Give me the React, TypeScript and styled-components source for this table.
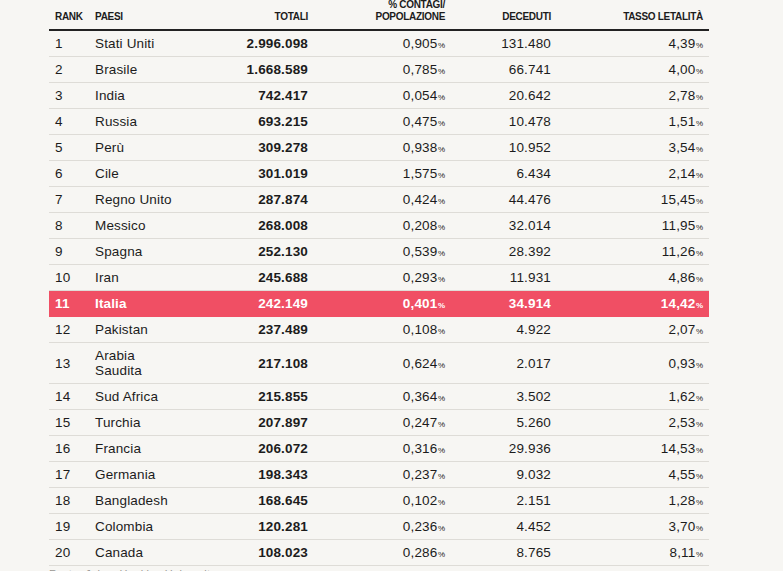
import React from "react";
import styled, { createGlobalStyle } from "styled-components";

const Global = createGlobalStyle`
  html, body { margin: 0; padding: 0; background: #f7f6f3; }
  body { font-family: "Liberation Sans", Arial, sans-serif; color: #1c1c1c; overflow: hidden; }
`;

const Wrap = styled.div`
  padding-left: 49px;
  width: 660px;
`;

const Grid = `
  display: grid;
  grid-template-columns: 46px 86px 127px 137px 106px 152px 6px;
  align-items: center;
`;

const HeadRow = styled.div`
  ${Grid}
  align-items: end;
  border-bottom: 2px solid #222;
  box-sizing: border-box;
  margin-top: -1px;
  height: 32px;
`;

const Th = styled.div<{ $right?: boolean; $pad?: number }>`
  font-size: 10px;
  font-weight: 700;
  text-transform: uppercase;
  letter-spacing: -0.3px;
  line-height: 12px;
  padding-bottom: 6px;
  text-align: ${(p) => (p.$right ? "right" : "left")};
  padding-left: ${(p) => p.$pad ?? 0}px;
  color: #1c1c1c;
`;

const Row = styled.div<{ $hi?: boolean }>`
  ${Grid}
  min-height: 25px;
  border-bottom: 1px solid ${(p) => (p.$hi ? "#f04f64" : "#dedcd7")};
  background: ${(p) => (p.$hi ? "#f04f64" : "transparent")};
  color: ${(p) => (p.$hi ? "#ffffff" : "#1c1c1c")};
  font-weight: ${(p) => (p.$hi ? 700 : 400)};
`;

const Td = styled.div<{ $right?: boolean; $bold?: boolean; $pad?: number }>`
  font-size: 13.5px;
  line-height: 15px;
  padding: 5px 0;
  text-align: ${(p) => (p.$right ? "right" : "left")};
  padding-left: ${(p) => p.$pad ?? 0}px;
  font-weight: ${(p) => (p.$bold ? 700 : "inherit")};
  letter-spacing: 0.15px;
`;

const Pct = styled.span`
  font-size: 8px;
  line-height: 0;
  letter-spacing: 0;
  margin-left: 0.5px;
`;

const Source = styled.div`
  font-size: 11px;
  color: #9a9893;
  padding-top: 2px;
  letter-spacing: 0.3px;
`;

type R = [string, string, string, string, string, string];
const data: R[] = [
  ["1", "Stati Uniti", "2.996.098", "0,905", "131.480", "4,39"],
  ["2", "Brasile", "1.668.589", "0,785", "66.741", "4,00"],
  ["3", "India", "742.417", "0,054", "20.642", "2,78"],
  ["4", "Russia", "693.215", "0,475", "10.478", "1,51"],
  ["5", "Perù", "309.278", "0,938", "10.952", "3,54"],
  ["6", "Cile", "301.019", "1,575", "6.434", "2,14"],
  ["7", "Regno Unito", "287.874", "0,424", "44.476", "15,45"],
  ["8", "Messico", "268.008", "0,208", "32.014", "11,95"],
  ["9", "Spagna", "252.130", "0,539", "28.392", "11,26"],
  ["10", "Iran", "245.688", "0,293", "11.931", "4,86"],
  ["11", "Italia", "242.149", "0,401", "34.914", "14,42"],
  ["12", "Pakistan", "237.489", "0,108", "4.922", "2,07"],
  ["13", "Arabia Saudita", "217.108", "0,624", "2.017", "0,93"],
  ["14", "Sud Africa", "215.855", "0,364", "3.502", "1,62"],
  ["15", "Turchia", "207.897", "0,247", "5.260", "2,53"],
  ["16", "Francia", "206.072", "0,316", "29.936", "14,53"],
  ["17", "Germania", "198.343", "0,237", "9.032", "4,55"],
  ["18", "Bangladesh", "168.645", "0,102", "2.151", "1,28"],
  ["19", "Colombia", "120.281", "0,236", "4.452", "3,70"],
  ["20", "Canada", "108.023", "0,286", "8.765", "8,11"],
];

export default function App() {
  return (
    <>
      <Global />
      <Wrap>
        <HeadRow>
          <Th $pad={6}>Rank</Th>
          <Th>Paesi</Th>
          <Th $right>Totali</Th>
          <Th $right>
            % contagi/
            <br />
            popolazione
          </Th>
          <Th $right>Deceduti</Th>
          <Th $right>Tasso letalità</Th>
          <div />
        </HeadRow>
        {data.map((r) => {
          const hi = r[1] === "Italia";
          return (
            <Row key={r[0]} $hi={hi}>
              <Td $pad={6}>{r[0]}</Td>
              <Td>{r[1]}</Td>
              <Td $right $bold>
                {r[2]}
              </Td>
              <Td $right>
                {r[3]}
                <Pct>%</Pct>
              </Td>
              <Td $right>{r[4]}</Td>
              <Td $right>
                {r[5]}
                <Pct>%</Pct>
              </Td>
              <div />
            </Row>
          );
        })}
        <Source>Fonte: Johns Hopkins University</Source>
      </Wrap>
    </>
  );
}
